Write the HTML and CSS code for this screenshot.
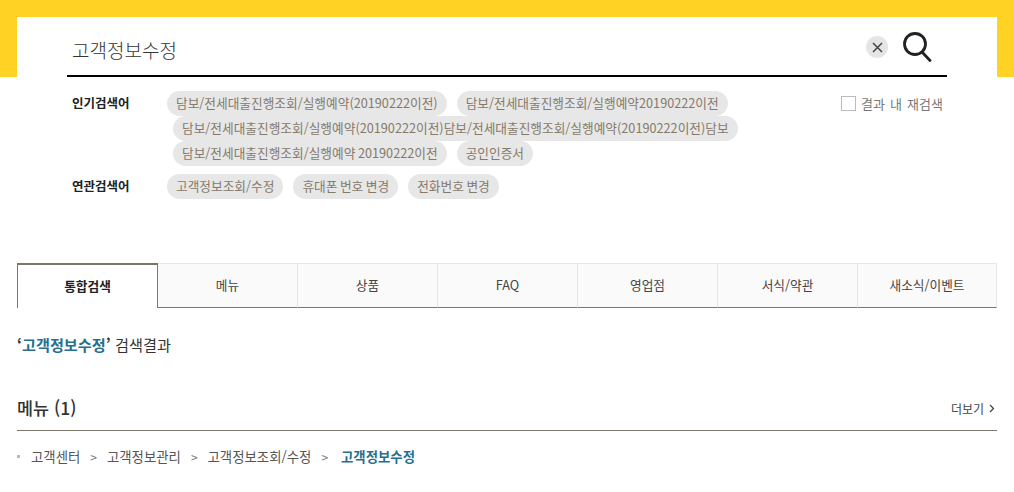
FILE: index.html
```html
<!DOCTYPE html>
<html lang="ko">
<head>
  <meta charset="UTF-8">
  <meta name="viewport" content="width=device-width, initial-scale=1.0">
  <title>검색결과</title>
  <link rel="stylesheet" href="styles.css">
</head>
<body>
  <div class="search-top">
    <div class="search-box">
      <div class="search-bar">
        <span class="search-text">고객정보수정</span>
        <span class="search-clear">
          <svg width="11" height="11" viewBox="0 0 11 11" fill="none" stroke="#444" stroke-width="1.5">
            <path d="M1 1l9 9M10 1l-9 9" />
          </svg>
        </span>
        <svg class="search-icon" width="29" height="30" viewBox="0 0 29 30" fill="none" stroke="#222" stroke-width="2.800">
          <circle cx="12" cy="12" r="10.500" />
          <path d="M19 20l8 8.500" stroke-linecap="round" />
        </svg>
      </div>
    </div>
  </div>

  <div class="keywords">
    <div class="keyword-group">
      <strong class="keyword-label">인기검색어</strong>
      <div class="keyword-list">
        <div class="chip-row">
          <a class="chip">담보/전세대출진행조회/실행예약(20190222이전)</a>
          <a class="chip">담보/전세대출진행조회/실행예약20190222이전</a>
        </div>
        <div class="chip-row chip-row-wrap">
          <a class="chip">담보/전세대출진행조회/실행예약(20190222이전)담보/전세대출진행조회/실행예약(20190222이전)담보</a>
        </div>
        <div class="chip-row chip-row-wrap">
          <a class="chip">담보/전세대출진행조회/실행예약 20190222이전</a>
          <a class="chip">공인인증서</a>
        </div>
      </div>
      <label class="research">
        <span class="research-check"></span>
        결과 내 재검색
      </label>
    </div>
    <div class="keyword-group keyword-group-related">
      <strong class="keyword-label">연관검색어</strong>
      <div class="keyword-list">
        <div class="chip-row">
          <a class="chip">고객정보조회/수정</a>
          <a class="chip">휴대폰 번호 변경</a>
          <a class="chip">전화번호 변경</a>
        </div>
      </div>
    </div>
  </div>

  <div class="content">
    <ul class="tabs">
      <li class="tab tab-active">통합검색</li>
      <li class="tab">메뉴</li>
      <li class="tab">상품</li>
      <li class="tab">FAQ</li>
      <li class="tab">영업점</li>
      <li class="tab">서식/약관</li>
      <li class="tab tab-last">새소식/이벤트</li>
    </ul>

    <p class="result-title">
      <strong class="result-word">‘<em>고객정보수정</em>’</strong> 검색결과
    </p>

    <div class="section-head">
      <h2>메뉴 (1)</h2>
      <a class="more">더보기
        <svg width="6" height="9" viewBox="0 0 6 9" fill="none" stroke="#444" stroke-width="1.300">
          <path d="M1 1l3.500 3.500L1 8" />
        </svg>
      </a>
    </div>

    <div class="breadcrumb">
      <span class="breadcrumb-dot"></span>
      <span>고객센터</span>
      <span class="breadcrumb-sep">&gt;</span>
      <span>고객정보관리</span>
      <span class="breadcrumb-sep">&gt;</span>
      <span>고객정보조회/수정</span>
      <span class="breadcrumb-sep">&gt;</span>
      <strong class="breadcrumb-current">고객정보수정</strong>
    </div>
  </div>
</body>
</html>
```

FILE: styles.css
```css
/* Base styles */
body, html {
  margin: 0;
  padding: 0;
  font-family: "Noto Sans CJK KR", "Noto Sans", sans-serif;
  font-size: 13px;
  color: #333;
  background-color: #fff;
}

/* Search */
.search-top {
  height: 77px;
  box-sizing: border-box;
  padding: 17px 17px 0;
  background-color: #ffd224;
}

.search-box {
  height: 60px;
  padding: 0 50px;
  background-color: #fff;
}

.search-bar {
  display: flex;
  align-items: center;
  height: 60px;
  box-sizing: border-box;
  padding: 2px 15px 0 5px;
  border-bottom: 2px solid #000;
}

.search-text {
  flex: 1;
  padding-top: 4px;
  font-size: 19px;
  font-weight: 300;
  color: #333;
}

.search-clear {
  display: flex;
  align-items: center;
  justify-content: center;
  width: 22px;
  height: 22px;
  margin-right: 15px;
  border-radius: 50%;
  background-color: #e5e5e5;
}

.search-icon {
  display: block;
}

/* Keywords */
.keywords {
  height: 186px;
  box-sizing: border-box;
  padding: 14px 71px 0 72px;
}

.keyword-group {
  display: flex;
  align-items: flex-start;
}

.keyword-group-related {
  margin-top: 8px;
}

.keyword-label {
  width: 95px;
  flex-shrink: 0;
  font-size: 12.500px;
  line-height: 24px;
  color: #222;
}

.keyword-list {
  flex: 1;
}

.chip-row {
  display: flex;
  gap: 10px;
}

.chip-row-wrap {
  padding-left: 6px;
}

.chip {
  height: 25px;
  padding: 0 9px;
  border-radius: 13px;
  background-color: #e7e7e7;
  font-size: 12.700px;
  line-height: 24px;
  word-spacing: -1px;
  color: #85796a;
  white-space: nowrap;
}

.research {
  display: flex;
  align-items: center;
  gap: 5px;
  height: 25px;
  font-size: 13px;
  word-spacing: 1.500px;
  color: #777;
}

.research-check {
  width: 13px;
  height: 13px;
  border: 1px solid #bbb;
}

/* Tabs */
.content {
  padding: 0 17px;
}

.tabs {
  display: flex;
  height: 45px;
  margin: 0;
  padding: 0;
  list-style: none;
}

.tab {
  width: 140px;
  box-sizing: border-box;
  border-top: 1px solid #e6e6e6;
  border-right: 1px solid #e6e6e6;
  border-bottom: 1px solid #7d766b;
  background-color: #fafafa;
  font-size: 12.700px;
  line-height: 41px;
  text-align: center;
  color: #444;
}

.tab-active {
  width: 141px;
  border-top: 2px solid #7d766b;
  border-left: 1px solid #7d766b;
  border-right: 1px solid #7d766b;
  border-bottom: none;
  background-color: #fff;
  font-weight: 700;
  color: #222;
}

.tab-last {
  width: 139px;
}

/* Result title */
.result-title {
  margin: 25px 0 0;
  font-size: 15.200px;
  line-height: 23px;
  color: #333;
}

.result-word em {
  font-style: normal;
  color: #26708f;
}

/* Section head */
.section-head {
  display: flex;
  align-items: center;
  justify-content: space-between;
  height: 44px;
  margin-top: 30px;
  border-bottom: 1px solid #7d766b;
}

.section-head h2 {
  margin: 0 0 2px;
  font-size: 17.500px;
  font-weight: 500;
  color: #333;
}

.more {
  display: flex;
  align-items: center;
  gap: 5px;
  padding-right: 2px;
  font-size: 12px;
  color: #444;
}

/* Breadcrumb */
.breadcrumb {
  display: flex;
  align-items: center;
  height: 50px;
  font-size: 13.400px;
  color: #555;
}

.breadcrumb-dot {
  width: 3px;
  height: 3px;
  margin-right: 11px;
  background-color: #bbb;
}

.breadcrumb-sep {
  margin: 0 10px;
  font-size: 12px;
  color: #777;
}

.breadcrumb-current {
  color: #26708f;
  margin-left: 3px;
}
```
